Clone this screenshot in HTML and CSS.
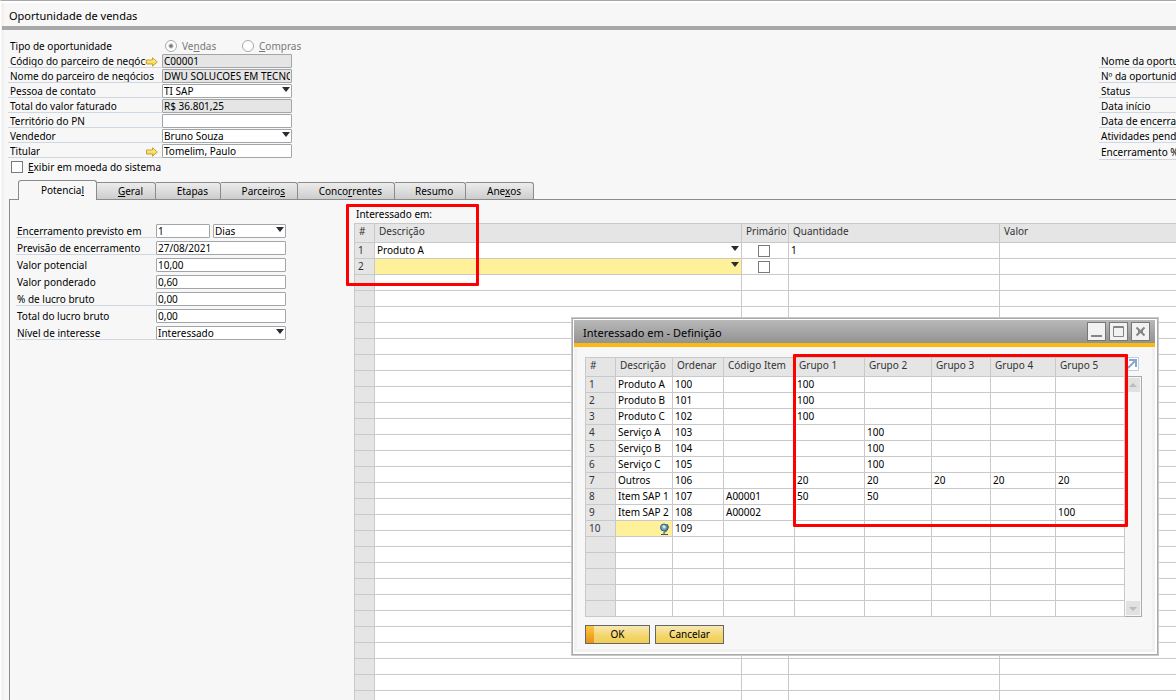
FILE: index.html
```html
<!DOCTYPE html>
<html lang="pt-BR">
<head>
<meta charset="utf-8">
<title>Oportunidade de vendas</title>
<link rel="stylesheet" href="styles.css">
</head>
<body>
<svg class="defs" aria-hidden="true">
  <symbol id="arrow" viewBox="0 0 12 10"><defs><linearGradient id="gold" x2="0" y2="1"><stop offset="0" stop-color="#fff8a8"/><stop offset="1" stop-color="#f4c832"/></linearGradient></defs><path d="M.5 3h6V.8L11.3 5 6.500 9.200V7h-6z" fill="url(#gold)" stroke="#c9a030"/></symbol>
</svg>
<main class="window">
  <h1 class="window-title">Oportunidade de vendas</h1>

  <div class="header">
    <form class="partner">
      <div class="row row-type">
        <span class="label">Tipo de oportunidade</span>
        <label class="radio"><input type="radio" name="tipo" checked disabled><span>Ve<u>n</u>das</span></label>
        <label class="radio"><input type="radio" name="tipo" disabled><span><u>C</u>ompras</span></label>
      </div>
      <div class="row"><label class="label line" for="cod"><span class="clip">Código do parceiro de negócios</span><svg class="link-arrow"><use href="#arrow"/></svg></label><input class="field locked" id="cod" value="C00001" readonly></div>
      <div class="row"><label class="label line" for="nome">Nome do parceiro de negócios</label><input class="field locked" id="nome" value="DWU SOLUCOES EM TECNOLOGIA" readonly></div>
      <div class="row"><label class="label line" for="contato">Pessoa de contato</label><span class="drop"><select class="field" id="contato"><option>TI SAP</option></select></span></div>
      <div class="row"><label class="label line" for="total">Total do valor faturado</label><input class="field locked" id="total" value="R$ 36.801,25" readonly></div>
      <div class="row"><label class="label line" for="terr">Território do PN</label><input class="field" id="terr"></div>
      <div class="row"><label class="label line" for="vend">Vendedor</label><span class="drop"><select class="field" id="vend"><option>Bruno Souza</option></select></span></div>
      <div class="row"><label class="label line" for="titular"><span class="clip">Titular</span><svg class="link-arrow"><use href="#arrow"/></svg></label><input class="field" id="titular" value="Tomelim, Paulo"></div>
      <label class="check-row"><input class="check" type="checkbox"><span><u>E</u>xibir em moeda do sistema</span></label>
    </form>
    <div class="summary">
      <div class="label line">Nome da oportunidade</div>
      <div class="label line">Nº da oportunidade</div>
      <div class="label line">Status</div>
      <div class="label line">Data início</div>
      <div class="label line">Data de encerramento</div>
      <div class="label line">Atividades pendentes</div>
      <div class="label line last">Encerramento %</div>
    </div>
  </div>

  <nav class="tabs">
    <button class="tab t-potencial active" type="button">Potencia<u>l</u></button>
    <button class="tab t-geral" type="button"><u>G</u>eral</button>
    <button class="tab t-etapas" type="button">Etapas</button>
    <button class="tab t-parceiros" type="button">Parceiro<u>s</u></button>
    <button class="tab t-concorrentes" type="button">Conco<u>r</u>rentes</button>
    <button class="tab t-resumo" type="button">Resumo</button>
    <button class="tab t-anexos" type="button">Ane<u>x</u>os</button>
  </nav>

  <section class="panel">
    <form class="potential">
      <div class="row"><label class="label line" for="enc">Encerramento previsto em</label><input class="field short" id="enc" value="1"><span class="drop"><select class="field" aria-label="Unidade"><option>Dias</option></select></span></div>
      <div class="row"><label class="label line" for="prev">Previsão de encerramento</label><input class="field" id="prev" value="27/08/2021"></div>
      <div class="row"><label class="label" for="vpot">Valor potencial</label><input class="field" id="vpot" value="10,00"></div>
      <div class="row"><label class="label" for="vpon">Valor ponderado</label><input class="field" id="vpon" value="0,60"></div>
      <div class="row"><label class="label line" for="pluc">% de lucro bruto</label><input class="field" id="pluc" value="0,00"></div>
      <div class="row"><label class="label" for="tluc">Total do lucro bruto</label><input class="field" id="tluc" value="0,00"></div>
      <div class="row"><label class="label line" for="nivel">Nível de interesse</label><span class="drop"><select class="field" id="nivel"><option>Interessado</option></select></span></div>
    </form>

    <div class="interest">
      <div class="caption">Interessado em:</div>
      <table class="grid main-grid">
        <colgroup><col class="m-num"><col class="m-desc"><col class="m-prim"><col class="m-qty"><col></colgroup>
        <thead><tr><th>#</th><th>Descrição</th><th>Primário</th><th>Quantidade</th><th>Valor</th></tr></thead>
        <tbody id="interest-rows">
          <tr><th>1</th><td class="pick"><span class="drop"><select aria-label="Descrição 1"><option>Produto A</option></select></span></td><td class="center"><input class="check" type="checkbox" aria-label="Primário 1"></td><td>1</td><td></td></tr>
          <tr><th>2</th><td class="pick current"><span class="drop"><select aria-label="Descrição 2"><option></option></select></span></td><td class="center"><input class="check" type="checkbox" aria-label="Primário 2"></td><td></td><td></td></tr>
        </tbody>
      </table>
    </div>
  </section>
</main>

<section class="dialog" role="dialog" aria-labelledby="dialog-title">
  <header class="dialog-bar">
    <h2 id="dialog-title">Interessado em - Definição</h2>
    <button class="win-btn" type="button" aria-label="Minimizar"><svg viewBox="0 0 17 17"><path d="M3 13h11" stroke-width="2"/></svg></button>
    <button class="win-btn" type="button" aria-label="Maximizar"><svg viewBox="0 0 17 17"><path d="M3.500 3.500h10v10h-10zM3 4.500h11"/></svg></button>
    <button class="win-btn" type="button" aria-label="Fechar"><svg viewBox="0 0 17 17"><path d="M4.500 4.500l8 8M12.500 4.500l-8 8" stroke-width="2"/><path d="M6 8.500h5M8.500 7v3" stroke-width="3"/></svg></button>
  </header>
  <div class="dialog-body">
    <div class="dialog-main">
      <table class="grid def-grid">
        <colgroup><col class="d-num"><col class="d-desc"><col class="d-ord"><col class="d-code"><col class="d-g1"><col class="d-g2"><col class="d-g3"><col class="d-g4"><col class="d-g5"></colgroup>
        <thead><tr><th>#</th><th>Descrição</th><th>Ordenar</th><th>Código Item</th><th>Grupo 1</th><th>Grupo 2</th><th>Grupo 3</th><th>Grupo 4</th><th>Grupo 5</th></tr></thead>
        <tbody id="definition-rows"></tbody>
      </table>
      <div class="side">
        <button class="expand" type="button" aria-label="Expandir"><svg viewBox="0 0 14 14"><path d="M.5.5h13v13H.500z" fill="#fff" stroke="#b5d0e8"/><path d="M3 11l7-7" stroke="#8aa6cc" stroke-width="2"/><path d="M4 3h7v7" fill="none" stroke="#8aa6cc" stroke-width="2"/></svg></button>
        <div class="scroll">
          <span class="scroll-btn"><svg viewBox="0 0 14 14"><path d="M3 9l4-4 4 4z" fill="#bbb"/></svg></span>
          <span class="scroll-btn"><svg viewBox="0 0 14 14"><path d="M3 6h8l-4 4z" fill="#bbb"/></svg></span>
        </div>
      </div>
    </div>
    <footer class="actions">
      <button class="action default" type="button">OK</button>
      <button class="action" type="button">Cancelar</button>
    </footer>
  </div>
</section>

<div class="mark mark-interest"></div>
<div class="mark mark-groups"></div>
<script src="script.js"></script>
</body>
</html>
```
FILE: styles.css
```css
* { box-sizing: border-box; }

body {
  margin: 0;
  height: 100vh;
  overflow: hidden;
  position: relative;
  background: #f7f7f7;
  color: #000;
  font: 10px/14px "Noto Sans", "Open Sans", sans-serif;
}

input, select, button { font: inherit; color: inherit; margin: 0; border-radius: 0; }
.defs { position: absolute; width: 0; height: 0; }

.window {
  min-height: 100%;
  border-top: 1px solid #a9a9a9;
  border-left: 1px solid #fff;
  box-shadow: inset 0 2px #fff, inset 3px 0 #f1f1f1;
}
.window-title {
  margin: 0 0 0 1px;
  height: 29px;
  padding: 3px 0 0 7px;
  border-bottom: 4px solid #a8a8a8;
  font-size: 11px;
  font-weight: 400;
  line-height: 24px;
}

/* Form rows */
.header { display: flex; justify-content: space-between; height: 150px; padding: 8px 0 0 7px; }
.row { display: flex; height: 15px; }
.row-type { height: 16px; align-items: center; }
.partner .row .field, .partner .row .drop { width: 130px; }
.label { width: 154px; height: 14px; padding-left: 2px; white-space: nowrap; overflow: hidden; }
.line { border-bottom: 1px solid #cfd8e0; }
label.label { display: flex; justify-content: space-between; }
.clip { overflow: hidden; }
.link-arrow { flex: none; width: 12px; height: 10px; margin: 3px 4px 0 0; }

.field {
  height: 14px;
  padding: 0 1px;
  border: 1px solid #a3a6a9;
  border-radius: 1px;
  background: #fff;
  outline: 0;
}
.locked { background: #e5e5e5; }
.drop { position: relative; display: block; }
.drop select { display: block; width: 100%; appearance: none; outline: 0; line-height: 12px; }
.drop::after {
  content: "";
  position: absolute;
  right: 2px;
  top: 3px;
  border: 4px solid transparent;
  border-top: 5px solid #2b2b33;
  border-bottom: 0;
  pointer-events: none;
}

.radio { display: flex; align-items: center; gap: 5px; width: 77px; padding-left: 3px; color: #777; }
.radio input {
  appearance: none;
  width: 12px;
  height: 12px;
  border: 1px solid #aaa;
  border-radius: 50%;
  background: #fff;
}
.radio input:checked { background: radial-gradient(circle, #777 0 1px, #fff 3px); }
.check { appearance: none; width: 12px; height: 12px; border: 1px solid #777b80; background: #fff; }
.check-row { display: inline-flex; align-items: center; gap: 5px; padding: 1px 0 0 3px; }

.summary { width: 77px; padding-top: 16px; overflow: hidden; }
.summary .label { margin-bottom: 1px; }
.summary .last { height: 16px; padding-top: 1px; }

/* Tabs */
.tabs { display: flex; align-items: flex-end; height: 19px; padding-left: 17px; }
.tab {
  height: 17px;
  padding: 0 12px 0 20px;
  border: 1px solid #8b8b8b;
  border-left: 0;
  border-bottom: 0;
  border-radius: 0 3px 0 0;
  background: linear-gradient(#ececec, #cdcdcd);
  line-height: 15px;
  text-align: right;
  white-space: nowrap;
}
.tab.active {
  position: relative;
  z-index: 1;
  height: 20px;
  margin-bottom: -1px;
  border-left: 1px solid #8b8b8b;
  border-radius: 3px 3px 0 0;
  background: #f7f7f7;
  line-height: 19px;
}
.t-potencial { width: 79px; }
.t-geral { width: 59px; }
.t-etapas { width: 65px; }
.t-parceiros { width: 77px; }
.t-concorrentes { width: 97px; }
.t-resumo { width: 71px; }
.t-anexos { width: 68px; }

.panel { display: flex; margin-left: 8px; border: 1px solid #8b8b8b; border-width: 1px 0 0 1px; }
.potential { flex: none; width: 344px; padding: 24px 0 0 6px; }
.potential .row { height: 17px; }
.potential .label { width: 140px; padding-left: 1px; }
.potential .field, .potential .drop { width: 130px; }
.potential .short { width: 54px; margin-right: 3px; }
.potential .short + .drop { width: 73px; }
.potential .drop .field { width: 100%; }

/* Grids */
.interest { flex: 1; min-width: 0; overflow: hidden; }
.caption { height: 23px; padding: 7px 0 0 2px; }
.grid { table-layout: fixed; border-collapse: collapse; background: #fff; }
.grid tr { height: 16px; }
.grid thead tr { height: 19px; }
.grid th, .grid td {
  padding: 0 0 0 2px;
  border: 1px solid #c9c9c9;
  font-weight: 400;
  line-height: 15px;
  text-align: left;
  white-space: nowrap;
}
.grid th { background: #e5e5e5; padding-left: 3px; color: #333; }
.grid thead th { padding: 0 0 3px 4px; }
.grid .center { padding: 0 2px 0 0; text-align: center; line-height: 0; }
.grid .current { background: #fff09a; }
.grid .pick { padding: 0; }
.grid .pick select { height: 15px; padding: 0 2px; border: 0; background: transparent; line-height: 15px; }

.main-grid { width: calc(100% + 1px); }
.m-num { width: 20px; }
.m-desc { width: 367px; }
.m-prim { width: 47px; }
.m-qty { width: 211px; }

.def-grid { width: 540px; }
.d-num { width: 30px; }
.d-desc { width: 57px; }
.d-ord { width: 51px; }
.d-code { width: 71px; }
.d-g1 { width: 70px; }
.d-g2 { width: 67px; }
.d-g3 { width: 59px; }
.d-g4 { width: 65px; }
.d-g5 { width: 69px; }
.globe { float: right; width: 11px; height: 12px; margin: 1px 2px 0 0; }

/* Floating definition window */
.dialog {
  position: absolute;
  left: 571px;
  top: 317px;
  width: 588px;
  border: 1px solid #c9c9c9;
  background: #fff;
  box-shadow: inset 0 0 0 1px #a9a9a9;
  padding: 2px 3px 3px 2px;
}
.dialog-bar {
  display: flex;
  align-items: center;
  gap: 3px;
  height: 27px;
  padding: 0 5px 0 9px;
  border-bottom: 4px solid #fdb913;
  background: linear-gradient(#b9b9b9, #929292);
}
.dialog-bar h2 { flex: 1; margin: 0; font-size: 11px; font-weight: 400; line-height: 16px; padding-top: 2px; }
.win-btn { width: 19px; height: 19px; padding: 0; border: 1px solid #777; background: #f2f2f2; }
.win-btn svg { display: block; width: 17px; height: 17px; fill: none; stroke: #858585; }
.dialog-body { padding: 10px 8px 5px; border: 3px solid #f1f1f1; border-top: 0; background: #f7f7f7; }
.dialog-main { display: flex; }
.side { display: flex; flex-direction: column; width: 17px; }
.expand { width: 14px; height: 14px; margin: 0 0 5px; padding: 0; border: 0; background: none; }
.expand svg, .scroll-btn svg { display: block; width: 14px; height: 14px; }
.scroll {
  flex: 1;
  display: flex;
  flex-direction: column;
  justify-content: space-between;
  padding: 1px;
  border: 1px solid #aaa;
  border-left: 0;
}
.scroll-btn { background: #e1e1e1; }
.actions { display: flex; gap: 5px; padding-top: 8px; }
.action {
  width: 69px;
  height: 19px;
  padding: 0 0 1px;
  border: 1px solid #666;
  background: linear-gradient(#f8e8b4, #f3d569 60%, #f0cd55);
  line-height: 15px;
}
.default {
  width: 65px;
  background: linear-gradient(#f8c83c, #ee9016) 0 0 / 8px 100% no-repeat, linear-gradient(#f8e8b4, #f3d569 60%, #f0cd55);
}

/* Highlight frames over the windows */
.mark { position: absolute; border: 3px solid #f00; border-radius: 1px; pointer-events: none; }
.mark-interest { left: 346px; top: 204px; width: 133px; height: 82px; }
.mark-groups { left: 793px; top: 354px; width: 335px; height: 173px; }
```
FILE: script.js
```js
const items = [
  ["Produto A", "100", "", "100", "", "", "", ""],
  ["Produto B", "101", "", "100", "", "", "", ""],
  ["Produto C", "102", "", "100", "", "", "", ""],
  ["Serviço A", "103", "", "", "100", "", "", ""],
  ["Serviço B", "104", "", "", "100", "", "", ""],
  ["Serviço C", "105", "", "", "100", "", "", ""],
  ["Outros", "106", "", "20", "20", "20", "20", "20"],
  ["Item SAP 1", "107", "A00001", "50", "50", "", "", ""],
  ["Item SAP 2", "108", "A00002", "", "", "", "", "100"],
  ["", "109", "", "", "", "", "", ""]
];
const globe = '<svg class="globe" viewBox="0 0 11 12"><circle cx="5" cy="4.500" r="3.500" fill="#6f9fc4" stroke="#2f5f8c"/><path d="M3 3l2-1 2 2-2 2z" fill="#d8e8c8"/><path d="M8 1q3 3 0 6.500-1 1.500-3 1.500M5 9v2M2 11.500h7" fill="none" stroke="#34566f"/></svg>';

const addRow = (body, number, cells) => {
  const row = body.insertRow();
  const head = document.createElement("th");
  head.textContent = number;
  row.append(head);
  cells.forEach(text => { row.insertCell().textContent = text; });
  return row;
};

const definition = document.getElementById("definition-rows");
for (let i = 0; i < 15; i++) {
  const row = addRow(definition, items[i] ? i + 1 : "", items[i] || Array(8).fill(""));
  if (i === 9) {
    row.cells[1].className = "current";
    row.cells[1].innerHTML = globe;
  }
}

const interest = document.getElementById("interest-rows");
for (let i = 0; i < 27; i++) addRow(interest, "", Array(4).fill(""));
```
